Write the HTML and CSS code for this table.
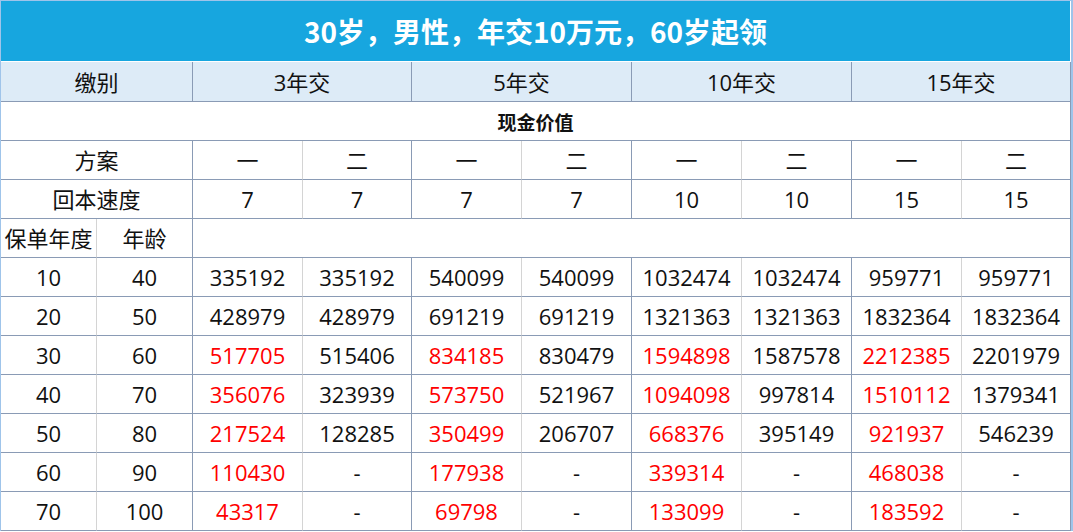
FILE: index.html
```html
<!DOCTYPE html>
<html lang="zh-CN">
<head>
<meta charset="utf-8">
<title>现金价值</title>
<link rel="stylesheet" href="styles.css">
</head>
<body>
<div class="sheet">
  <div class="title">30岁，男性，年交10万元，60岁起领</div>
  <div class="gap"></div>
  <div class="grid">
    <div class="c head span2 sep">缴别</div>
    <div class="c head span2 sep">3年交</div>
    <div class="c head span2 sep">5年交</div>
    <div class="c head span2 sep">10年交</div>
    <div class="c head span2 sep">15年交</div>

    <div class="c span10 sep section">现金价值</div>

    <div class="c span2 sep">方案</div>
    <div class="c thin">一</div><div class="c sep">二</div>
    <div class="c thin">一</div><div class="c sep">二</div>
    <div class="c thin">一</div><div class="c sep">二</div>
    <div class="c thin">一</div><div class="c sep">二</div>

    <div class="c span2 sep">回本速度</div>
    <div class="c thin">7</div><div class="c sep">7</div>
    <div class="c thin">7</div><div class="c sep">7</div>
    <div class="c thin">10</div><div class="c sep">10</div>
    <div class="c thin">15</div><div class="c sep">15</div>

    <div class="c thin">保单年度</div>
    <div class="c sep">年龄</div>
    <div class="c span8 sep"></div>

    <div class="c thin">10</div><div class="c sep">40</div>
    <div class="c thin">335192</div><div class="c sep">335192</div>
    <div class="c thin">540099</div><div class="c sep">540099</div>
    <div class="c thin">1032474</div><div class="c sep">1032474</div>
    <div class="c thin">959771</div><div class="c sep">959771</div>

    <div class="c thin">20</div><div class="c sep">50</div>
    <div class="c thin">428979</div><div class="c sep">428979</div>
    <div class="c thin">691219</div><div class="c sep">691219</div>
    <div class="c thin">1321363</div><div class="c sep">1321363</div>
    <div class="c thin">1832364</div><div class="c sep">1832364</div>

    <div class="c thin">30</div><div class="c sep">60</div>
    <div class="c thin red">517705</div><div class="c sep">515406</div>
    <div class="c thin red">834185</div><div class="c sep">830479</div>
    <div class="c thin red">1594898</div><div class="c sep">1587578</div>
    <div class="c thin red">2212385</div><div class="c sep">2201979</div>

    <div class="c thin">40</div><div class="c sep">70</div>
    <div class="c thin red">356076</div><div class="c sep">323939</div>
    <div class="c thin red">573750</div><div class="c sep">521967</div>
    <div class="c thin red">1094098</div><div class="c sep">997814</div>
    <div class="c thin red">1510112</div><div class="c sep">1379341</div>

    <div class="c thin">50</div><div class="c sep">80</div>
    <div class="c thin red">217524</div><div class="c sep">128285</div>
    <div class="c thin red">350499</div><div class="c sep">206707</div>
    <div class="c thin red">668376</div><div class="c sep">395149</div>
    <div class="c thin red">921937</div><div class="c sep">546239</div>

    <div class="c thin">60</div><div class="c sep">90</div>
    <div class="c thin red">110430</div><div class="c sep">-</div>
    <div class="c thin red">177938</div><div class="c sep">-</div>
    <div class="c thin red">339314</div><div class="c sep">-</div>
    <div class="c thin red">468038</div><div class="c sep">-</div>

    <div class="c thin">70</div><div class="c sep">100</div>
    <div class="c thin red">43317</div><div class="c sep">-</div>
    <div class="c thin red">69798</div><div class="c sep">-</div>
    <div class="c thin red">133099</div><div class="c sep">-</div>
    <div class="c thin red">183592</div><div class="c sep">-</div>
  </div>
</div>
</body>
</html>
```
FILE: styles.css
```css
html, body {
  margin: 0;
  padding: 0;
  background: #ffffff;
}

.sheet {
  width: 1073px;
  box-sizing: border-box;
  border-top: 1px solid #9fc4ea;
  border-left: 1px solid #9fc4ea;
  border-right: 2px solid #9fc4ea;
  font-family: "Open Sans", "Noto Sans CJK SC", sans-serif;
  color: #111111;
}

.title {
  height: 60px;
  margin-right: 1px;
  background: #17a6df;
  color: #ffffff;
  font-family: "Noto Sans CJK SC", sans-serif;
  font-weight: 700;
  font-size: 28px;
  display: flex;
  align-items: center;
  justify-content: center;
}

.gap {
  height: 1px;
}

.grid {
  display: grid;
  grid-template-columns: 96px 96px 110px 109px 110px 110px 110px 110px 110px 109px;
  grid-template-rows: 40px;
  grid-auto-rows: 39px;
}

.c {
  box-sizing: border-box;
  border-bottom: 1px solid #8a9bb5;
  display: flex;
  align-items: center;
  justify-content: center;
  font-size: 22px;
  white-space: nowrap;
  line-height: 1;
}

.thin {
  border-right: 1px solid #d4d4d4;
}

.sep {
  border-right: 1px solid #8a9bb5;
}

.head {
  background: #ddebf7;
}

.span2 { grid-column: span 2; }
.span8 { grid-column: span 8; }
.span10 { grid-column: span 10; }

.section {
  font-family: "Noto Sans CJK SC", sans-serif;
  font-weight: 700;
  font-size: 19px;
}

.red {
  color: #ff0000;
}
```
